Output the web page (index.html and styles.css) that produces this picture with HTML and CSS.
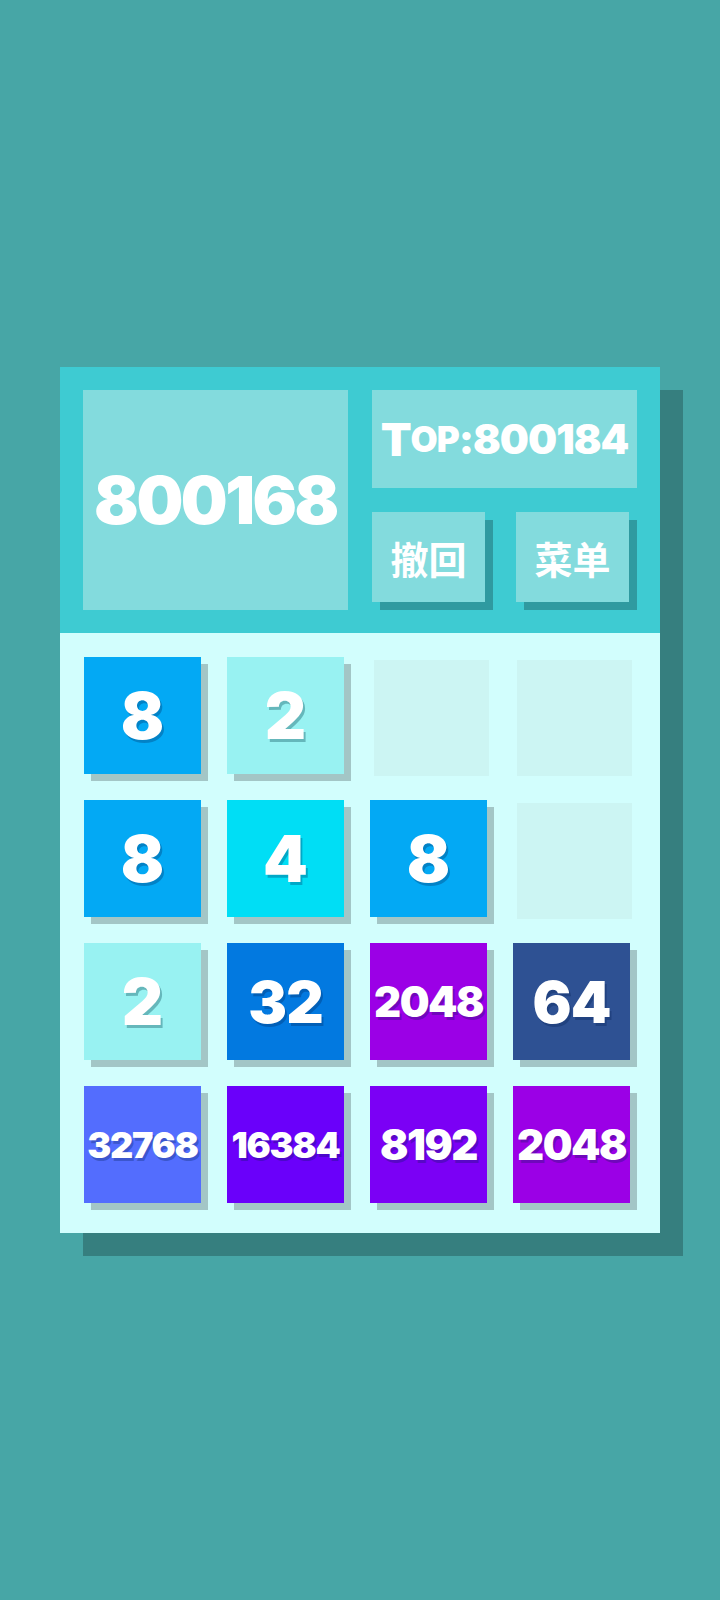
FILE: index.html
```html
<!DOCTYPE html>
<html lang="zh">
<head>
<meta charset="utf-8">
<title>2048</title>
<link rel="stylesheet" href="styles.css">
</head>
<body>
<div class="page">
  <div class="panel">
    <div class="header">
      <div class="score">800168</div>
      <div class="side">
        <div class="top"><span class="cap">T</span><span class="sc">OP</span>:800184</div>
        <div class="buttons">
          <div class="btn">撤回</div>
          <div class="btn">菜单</div>
        </div>
      </div>
    </div>
    <div class="board">
      <div class="cell"><div class="tile v8 t1">8</div></div>
      <div class="cell"><div class="tile v2 t1">2</div></div>
      <div class="cell"><div class="empty"></div></div>
      <div class="cell"><div class="empty"></div></div>

      <div class="cell"><div class="tile v8 t1">8</div></div>
      <div class="cell"><div class="tile v4 t1">4</div></div>
      <div class="cell"><div class="tile v8 t1">8</div></div>
      <div class="cell"><div class="empty"></div></div>

      <div class="cell"><div class="tile v2 t1">2</div></div>
      <div class="cell"><div class="tile v32 t2">32</div></div>
      <div class="cell"><div class="tile v2048 t4">2048</div></div>
      <div class="cell"><div class="tile v64 t2">64</div></div>

      <div class="cell"><div class="tile v32768 t5">32768</div></div>
      <div class="cell"><div class="tile v16384 t5">16384</div></div>
      <div class="cell"><div class="tile v8192 t4">8192</div></div>
      <div class="cell"><div class="tile v2048 t4">2048</div></div>
    </div>
  </div>
</div>
</body>
</html>
```
FILE: styles.css
```css
html, body {
  margin: 0;
  padding: 0;
}
body {
  background: #47a6a6;
  width: 720px;
  height: 1600px;
  overflow: hidden;
  font-family: "Inter", "Lato", "Noto Sans CJK SC", sans-serif;
  color: #ffffff;
}
.page {
  padding: 367px 0 0 60px;
}
.panel {
  width: 600px;
  box-shadow: 23px 23px 0 #367f7f;
}
.header {
  background: #3ecbd2;
  padding: 23px;
  display: flex;
  gap: 24px;
  height: 220px;
}
.score {
  width: 265px;
  height: 220px;
  background: #83dbdd;
  display: flex;
  align-items: center;
  justify-content: center;
  font-size: 66px;
  font-weight: 900;
  letter-spacing: -2.5px;
}
.side {
  width: 265px;
  display: flex;
  flex-direction: column;
  gap: 24px;
}
.top {
  height: 98px;
  background: #83dbdd;
  display: flex;
  align-items: center;
  justify-content: center;
  font-size: 41px;
  font-weight: 900;
  letter-spacing: -1px;
}
.top .cap {
  font-size: 45px;
}
.top .sc {
  font-size: 35px;
}
.buttons {
  display: flex;
  justify-content: space-between;
  padding-right: 8px;
}
.btn {
  width: 113px;
  height: 90px;
  background: #83dbdd;
  box-shadow: 8px 8px 0 #2f9aa0;
  display: flex;
  align-items: center;
  justify-content: center;
  font-family: "Noto Sans CJK SC", sans-serif;
  font-size: 38px;
  font-weight: 700;
}
.board {
  background: #d2fefd;
  height: 576px;
  padding: 24px 0 0 24px;
  display: grid;
  grid-template-columns: repeat(4, 117px);
  grid-template-rows: repeat(4, 117px);
  gap: 26px;
}
.cell {
  width: 117px;
  height: 117px;
}
.empty {
  width: 115px;
  height: 116px;
  margin: 3px 0 0 4px;
  background: #ccf5f3;
}
.tile {
  width: 117px;
  height: 117px;
  display: flex;
  align-items: center;
  justify-content: center;
  font-weight: 900;
  box-shadow: 7px 7px 0 #a3c6c6;
  text-shadow: 2px 3px 0 rgba(0, 30, 80, 0.28);
  line-height: 1;
}
.t1 { font-size: 64px; }
.t2 { font-size: 58px; letter-spacing: -1px; }
.t4 { font-size: 42px; letter-spacing: -1.5px; }
.t5 { font-size: 36px; letter-spacing: -1.3px; }

.v2 { background: #98f2f2; text-shadow: 2px 3px 0 rgba(40, 110, 120, 0.45); }
.v4 { background: #00def5; }
.v8 { background: #03a9f4; }
.v32 { background: #0279e0; }
.v64 { background: #2e5193; }
.v2048 { background: #9b00e6; }
.v8192 { background: #7b00f5; }
.v16384 { background: #6a00fa; }
.v32768 { background: #536dfe; }
```
